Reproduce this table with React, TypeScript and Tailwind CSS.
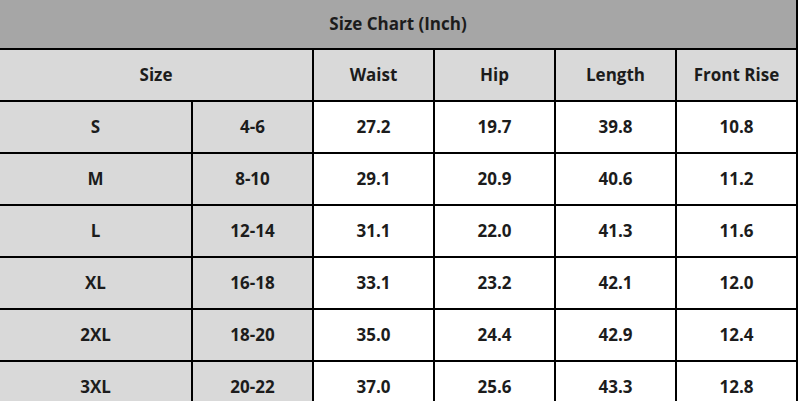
import React from 'react';

interface SizeRow {
  size: string;
  us: string;
  waist: string;
  hip: string;
  length: string;
  frontRise: string;
}

const rows: SizeRow[] = [
  { size: 'S', us: '4-6', waist: '27.2', hip: '19.7', length: '39.8', frontRise: '10.8' },
  { size: 'M', us: '8-10', waist: '29.1', hip: '20.9', length: '40.6', frontRise: '11.2' },
  { size: 'L', us: '12-14', waist: '31.1', hip: '22.0', length: '41.3', frontRise: '11.6' },
  { size: 'XL', us: '16-18', waist: '33.1', hip: '23.2', length: '42.1', frontRise: '12.0' },
  { size: '2XL', us: '18-20', waist: '35.0', hip: '24.4', length: '42.9', frontRise: '12.4' },
  { size: '3XL', us: '20-22', waist: '37.0', hip: '25.6', length: '43.3', frontRise: '12.8' },
];

const headCell = 'flex h-[50px] items-center justify-center bg-[#d9d9d9]';
const dataCell = 'flex h-[50px] items-center justify-center bg-white';

const App: React.FC = () => {
  return (
    <div className="h-[401px] w-[803px] overflow-hidden bg-white font-['Open_Sans',sans-serif] text-[17px] font-bold text-[#1c1c1c]">
      <div className="w-[798px] bg-black pr-[2px]">
        <div className="grid grid-cols-[191px_119px_119px_119px_119px_119px] gap-[2px]">
          {/* Title */}
          <div className="col-span-6 flex h-[48px] items-center justify-center bg-[#a6a6a6]">
            Size Chart (Inch)
          </div>

          {/* Column headers */}
          <div className={`col-span-2 ${headCell}`}>Size</div>
          <div className={headCell}>Waist</div>
          <div className={headCell}>Hip</div>
          <div className={headCell}>Length</div>
          <div className={headCell}>Front Rise</div>

          {/* Body */}
          {rows.map((r) => (
            <React.Fragment key={r.size}>
              <div className={headCell}>{r.size}</div>
              <div className={headCell}>{r.us}</div>
              <div className={dataCell}>{r.waist}</div>
              <div className={dataCell}>{r.hip}</div>
              <div className={dataCell}>{r.length}</div>
              <div className={dataCell}>{r.frontRise}</div>
            </React.Fragment>
          ))}
        </div>
      </div>
    </div>
  );
};

export default App;
